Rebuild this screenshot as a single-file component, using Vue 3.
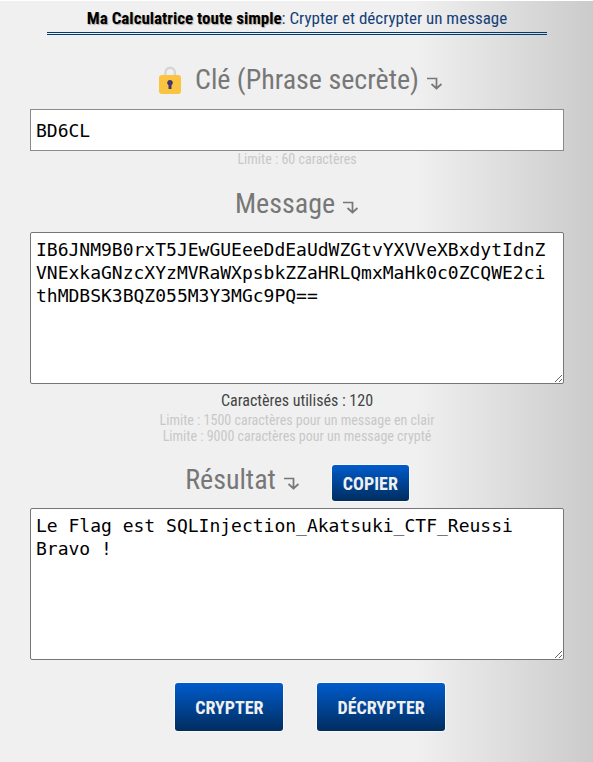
<script setup>
import { ref, computed } from 'vue'

const cle = ref('BD6CL')
const message = ref(
  'IB6JNM9B0rxT5JEwGUEeeDdEaUdWZGtvYXVVeXBxdytIdnZVNExkaGNzcXYzMVRaWXpsbkZZaHRLQmxMaHk0c0ZCQWE2cithMDBSK3BQZ055M3Y3MGc9PQ=='
)
const resultat = ref('Le Flag est SQLInjection_Akatsuki_CTF_Reussi\nBravo !')
const utilises = computed(() => message.value.length)

function copier() {
  navigator.clipboard?.writeText(resultat.value)
}
</script>

<template>
  <main class="page">
    <h1 class="title"><strong>Ma Calculatrice toute simple</strong>: Crypter et décrypter un message</h1>

    <form class="form" @submit.prevent>
      <div class="heading key-heading">
        <svg class="lock" viewBox="0 0 22 28" aria-hidden="true">
          <path d="M6.500 10V6.500a4.700 4.700 0 0 1 9.400 0V10" fill="none" stroke="#d5d5d5" stroke-width="2.400" />
          <rect x="0" y="9" width="22" height="19" rx="3" fill="#fbc440" />
          <path d="M11 14a2.800 2.800 0 0 1 1.500 5.200V23h-3v-3.800A2.800 2.800 0 0 1 11 14z" fill="#40386c" />
        </svg>
        <label for="cle">Clé (Phrase secrète)</label>
        <svg class="arrow" viewBox="0 0 16 13" aria-hidden="true">
          <path d="M0 1.500H9.500V11.500M4.500 7L9.500 11.500L14.500 7" />
        </svg>
      </div>
      <input id="cle" v-model="cle" class="field" type="text" maxlength="60" />
      <p class="limit">Limite : 60 caractères</p>

      <div class="heading message-heading">
        <label for="message">Message</label>
        <svg class="arrow" viewBox="0 0 16 13" aria-hidden="true">
          <path d="M0 1.500H9.500V11.500M4.500 7L9.500 11.500L14.500 7" />
        </svg>
      </div>
      <textarea id="message" v-model="message" class="field area" spellcheck="false"></textarea>
      <p class="count">Caractères utilisés : {{ utilises }}</p>
      <p class="limit">Limite : 1500 caractères pour un message en clair</p>
      <p class="limit">Limite : 9000 caractères pour un message crypté</p>

      <div class="heading result-heading">
        <label for="resultat">Résultat</label>
        <svg class="arrow" viewBox="0 0 16 13" aria-hidden="true">
          <path d="M0 1.500H9.500V11.500M4.500 7L9.500 11.500L14.500 7" />
        </svg>
        <button class="btn copy" type="button" @click="copier">COPIER</button>
      </div>
      <textarea id="resultat" v-model="resultat" class="field area" spellcheck="false"></textarea>

      <div class="actions">
        <button class="btn" type="submit">CRYPTER</button>
        <button class="btn" type="button">DÉCRYPTER</button>
      </div>
    </form>
  </main>
</template>

<style>
body {
  background: #f0f0f0;
}
</style>

<style scoped>
.page {
  box-sizing: border-box;
  min-height: 100vh;
  border-top: 1px solid #fff;
  padding: 6px 29px 0 30px;
  background: linear-gradient(90deg, #f0f0f0 70%, #dfdfdf 84%, #cbcbcb 100%);
  font-family: "Roboto Condensed", "Liberation Sans Narrow", "DejaVu Sans Condensed", sans-serif;
  text-align: center;
}
.title {
  margin: 0 17px;
  padding-bottom: 3px;
  border-bottom: 3px double #003b73;
  color: #153f78;
  font-size: 17px;
  line-height: 22px;
  font-weight: 400;
}
.title strong {
  color: #000;
  text-shadow: 1px 1px 1px #aaa;
}
.heading {
  display: flex;
  align-items: center;
  justify-content: center;
  gap: 8px;
  height: 40px;
  color: #777;
  font-size: 28px;
  line-height: 40px;
}
.key-heading {
  margin: 25px 0 9px;
  padding-left: 8px;
}
.message-heading {
  margin: 17px 0 8px;
}
.result-heading {
  margin: 16px 0 8px;
}
.lock {
  width: 22px;
  height: 28px;
  margin-right: 6px;
}
.arrow {
  width: 16px;
  height: 13px;
  margin-top: 7px;
  fill: none;
  stroke: #777;
  stroke-width: 1.7;
}
.field {
  display: block;
  box-sizing: border-box;
  width: 100%;
  margin: 0;
  border: 1px solid #8b8b8b;
  padding: 5px;
  background: #fff;
  color: #000;
  font-family: "DejaVu Sans Mono", monospace;
  font-size: 18px;
  line-height: 23px;
  outline: none;
}
input.field {
  height: 42px;
}
.area {
  height: 152px;
  border-color: #767676;
  border-radius: 2px;
  padding: 5px 12px 5px 5px;
  resize: both;
  word-break: break-all;
}
.limit,
.count {
  margin: 0;
  color: #c8c8c8;
  font-size: 14px;
  line-height: 16px;
}
.count {
  padding-top: 6px;
  color: #444;
  font-size: 16px;
  line-height: 22px;
}
.btn {
  height: 48px;
  border: 0;
  border-radius: 3px;
  padding: 0 20px;
  background: linear-gradient(#005bcc, #002d5e);
  box-shadow: 0 0 0 1px #f8f8f8;
  color: #f0f0f0;
  font-family: inherit;
  font-size: 18px;
  font-weight: 700;
}
.copy {
  height: 36px;
  margin: 6px 0 0 24px;
  padding: 0 11px;
}
.actions {
  display: flex;
  justify-content: center;
  gap: 34px;
  padding: 23px 0 31px 26px;
}
</style>
